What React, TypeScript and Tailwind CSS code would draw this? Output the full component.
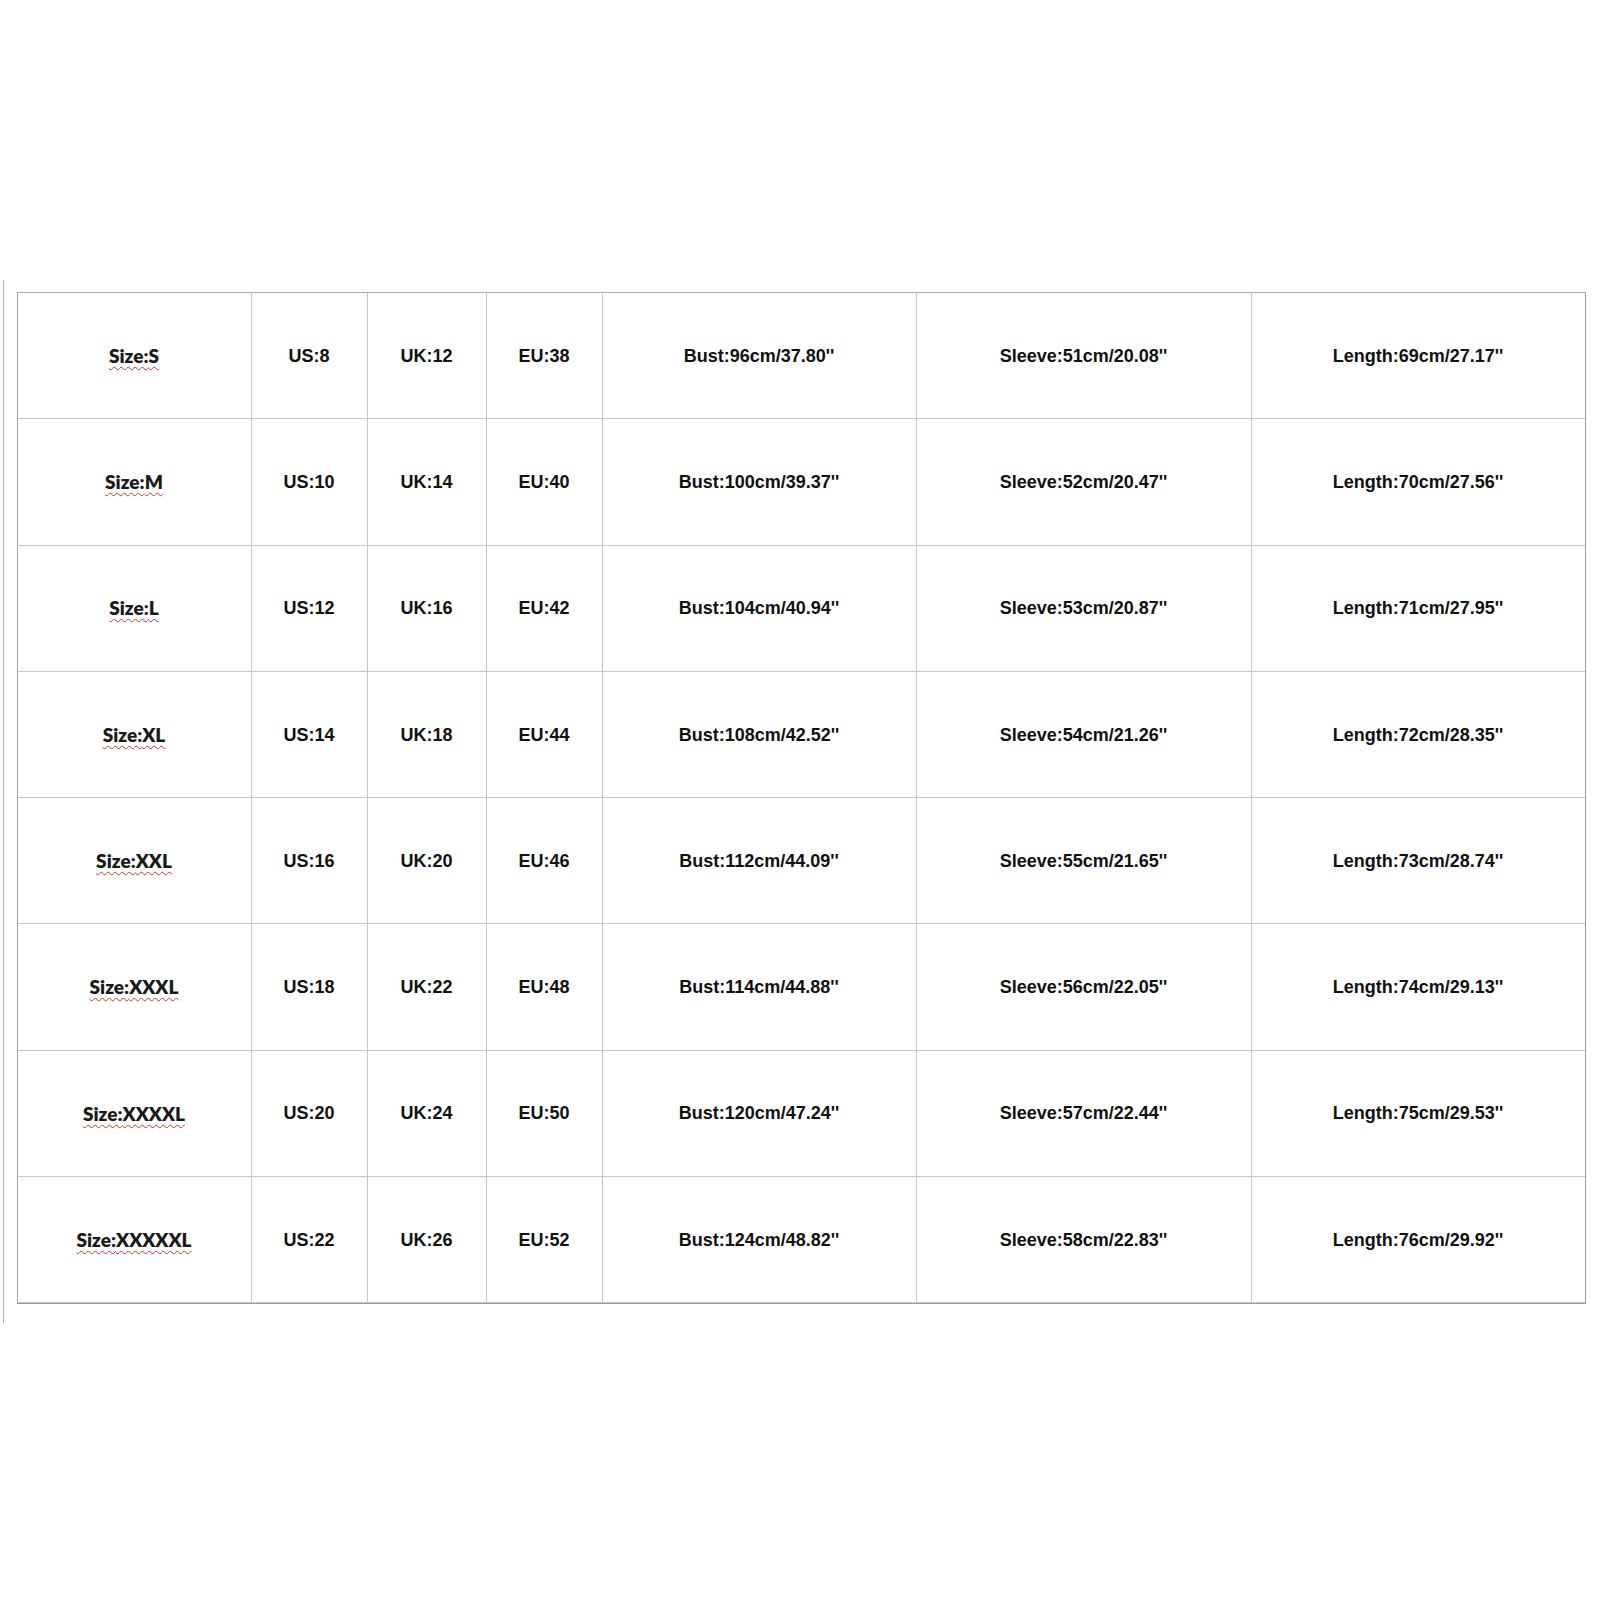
import React from 'react'

type Row = {
  size: string
  us: string
  uk: string
  eu: string
  bust: string
  sleeve: string
  length: string
}

const rows: Row[] = [
  { size: 'S', us: '8', uk: '12', eu: '38', bust: '96cm/37.80', sleeve: '51cm/20.08', length: '69cm/27.17' },
  { size: 'M', us: '10', uk: '14', eu: '40', bust: '100cm/39.37', sleeve: '52cm/20.47', length: '70cm/27.56' },
  { size: 'L', us: '12', uk: '16', eu: '42', bust: '104cm/40.94', sleeve: '53cm/20.87', length: '71cm/27.95' },
  { size: 'XL', us: '14', uk: '18', eu: '44', bust: '108cm/42.52', sleeve: '54cm/21.26', length: '72cm/28.35' },
  { size: 'XXL', us: '16', uk: '20', eu: '46', bust: '112cm/44.09', sleeve: '55cm/21.65', length: '73cm/28.74' },
  { size: 'XXXL', us: '18', uk: '22', eu: '48', bust: '114cm/44.88', sleeve: '56cm/22.05', length: '74cm/29.13' },
  { size: 'XXXXL', us: '20', uk: '24', eu: '50', bust: '120cm/47.24', sleeve: '57cm/22.44', length: '75cm/29.53' },
  { size: 'XXXXXL', us: '22', uk: '26', eu: '52', bust: '124cm/48.82', sleeve: '58cm/22.83', length: '76cm/29.92' },
]

// grid column widths measured from the chart
const cols = 'grid grid-cols-[234px_116px_119px_116px_314px_335px_333px]'

const Cell: React.FC<{ children: React.ReactNode; last?: boolean }> = ({ children, last }) => (
  <div
    className={`h-[126.3px] flex items-center justify-center pt-[1px] border-b border-[#c6c6c6] ${
      last ? '' : 'border-r'
    } text-[18px] font-bold text-[#111] [font-family:'Liberation_Sans',Arial,sans-serif]`}
  >
    {children}
  </div>
)

export default function App() {
  return (
    <div className="w-[1600px] h-[1600px] bg-white pt-[280px] pl-[3px]">
      <div className="w-[1597px] h-[1043px] border-l-[1.5px] border-[#b4b4b4] pt-[12px] pl-[12.5px]">
        <div className="w-[1569px] border border-[#a9a9a9] border-b-[#9a9a9a] border-r-[#9a9a9a]">
          {rows.map((r) => (
            <div key={r.size} className={cols}>
              <Cell>
                <span className="text-[19px] font-extrabold text-[#1a1a1a] [font-family:Lato,'Open_Sans',sans-serif] underline decoration-wavy decoration-[#c0392b] decoration-[1px] underline-offset-[3px]">
                  Size:{r.size}
                </span>
              </Cell>
              <Cell>US:{r.us}</Cell>
              <Cell>UK:{r.uk}</Cell>
              <Cell>EU:{r.eu}</Cell>
              <Cell>Bust:{r.bust}''</Cell>
              <Cell>Sleeve:{r.sleeve}''</Cell>
              <Cell last>Length:{r.length}''</Cell>
            </div>
          ))}
        </div>
      </div>
    </div>
  )
}
